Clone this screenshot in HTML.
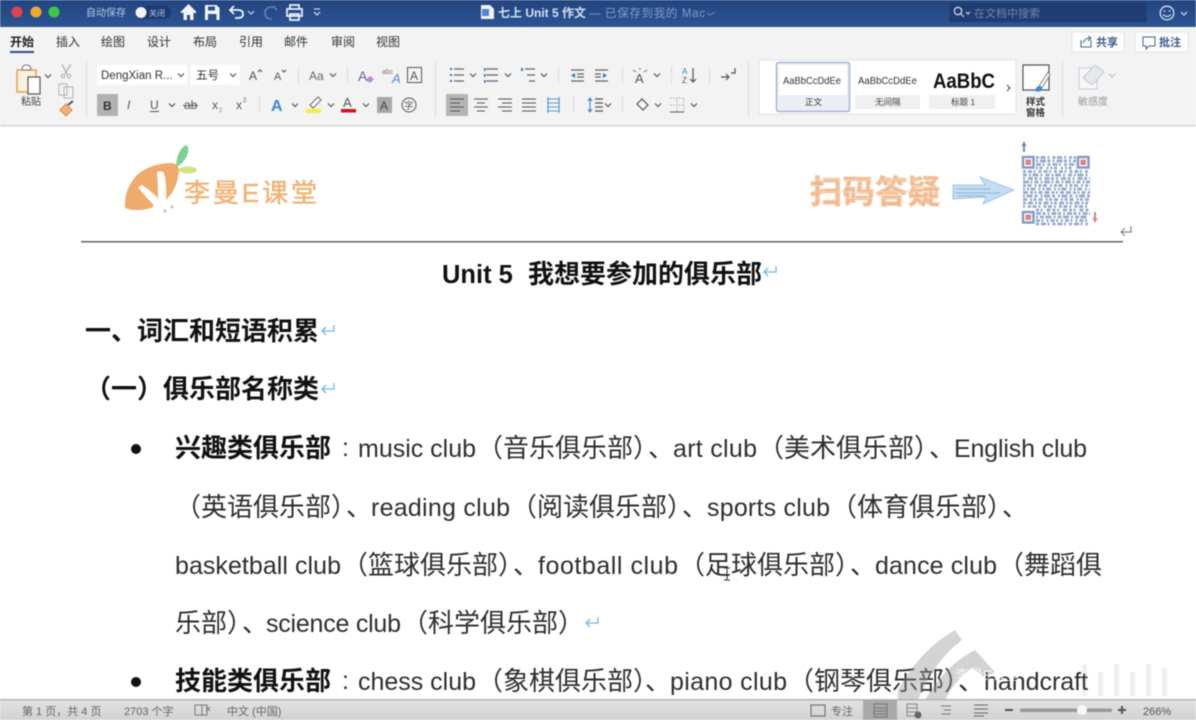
<!DOCTYPE html>
<html><head><meta charset="utf-8"><style>
html,body{margin:0;padding:0;background:#fff;width:1196px;height:720px;overflow:hidden}
svg{display:block;filter:blur(.4px)}
text{font-family:"Liberation Sans","Noto Sans CJK SC",sans-serif;white-space:pre}
.b text{font-size:25px;fill:#2e2e2e}
.c{font-size:26px!important}
.h{font-size:26px!important;font-weight:700;fill:#111!important}
.t{font-size:12px;fill:#333}
.s{font-size:10px;fill:#444}
.st{font-size:11px;fill:#666}
.ic{fill:none;stroke:#555;stroke-width:1.2}
</style></head><body>
<svg width="1196" height="720" viewBox="0 0 1196 720" xmlns="http://www.w3.org/2000/svg">
<defs>
<linearGradient id="tb" x1="0" y1="0" x2="0" y2="1"><stop offset="0" stop-color="#234580"/><stop offset="1" stop-color="#2c5494"/></linearGradient>
<linearGradient id="sb" x1="0" y1="0" x2="0" y2="1"><stop offset="0" stop-color="#e2e2e2"/><stop offset="1" stop-color="#d2d2d2"/></linearGradient>
<path id="chev" d="M-3-1.500 0 1.500 3-1.500" fill="none" stroke="#555" stroke-width="1.200"/>
<path id="pmk" d="M13-6V0H1M5-4 1 0 5 4" fill="none" stroke="#74b6e6" stroke-width="1.300"/>
</defs>
<rect width="1196" height="720" fill="#fff"/>

<!-- title bar -->
<rect width="1196" height="27" fill="url(#tb)"/>
<circle cx="17" cy="12" r="5.500" fill="#e0434f"/><circle cx="36" cy="12" r="5.500" fill="#f0a92e"/><circle cx="54" cy="12" r="5.500" fill="#3cc84a"/>
<text x="86" y="16" font-size="10" fill="#b4c8e6">自动保存</text>
<rect x="135" y="6" width="36" height="13" rx="6.500" fill="#1e3a70"/><circle cx="141" cy="12.500" r="5.500" fill="#f4f4f4"/>
<text x="149" y="16" font-size="8" fill="#b4c8e6">关闭</text>
<path d="M188.500 4 180.500 12 182 13.500 183.500 12.300V20H187V15H190V20H193.500V12.300L195 13.500 196.500 12Z" fill="#f2f5fb"/>
<path d="M205 5H216.500L219.500 8V20H205Z" fill="#f2f5fb"/><rect x="208" y="6.500" width="7" height="4" fill="#2a4f8e"/><rect x="208" y="14" width="8.500" height="6" fill="#2a4f8e"/>
<path d="M234 6 230 10 234 14M230 10H238Q243 10 243 14T238 18H235" fill="none" stroke="#eef3fa" stroke-width="1.800"/>
<path d="M248 11 251 14 254 11" fill="none" stroke="#c7d5ea" stroke-width="1.200"/>
<path d="M273 6 277 10M273 7H270Q264 9 265 14T272 19" fill="none" stroke="#6283b8" stroke-width="1.600"/>
<path d="M290 9V5H299V9M287 9H302V16H287ZM290 14H299V20H290Z" fill="none" stroke="#eef3fa" stroke-width="1.700"/>
<path d="M314 9H320M314 12 317 15 320 12" fill="none" stroke="#c7d5ea" stroke-width="1.300"/>
<path d="M481 5H490L494 9V19H481Z" fill="#eef2f9"/><rect x="482" y="9" width="7" height="7" fill="#4f86d4"/>
<text x="498" y="17" font-size="12" font-weight="700" fill="#d5e0f1">七上 Unit 5 作文</text>
<text x="589" y="17" font-size="11.500" fill="#7f9ccb" textLength="116">— 已保存到我的 Mac</text>
<path d="M707 13 710 15 715 12" fill="none" stroke="#6f8dbd" stroke-width="1"/>
<rect x="949" y="3" width="198" height="19" rx="2" fill="#1f3c73"/>
<circle cx="958" cy="11" r="3.700" fill="none" stroke="#cfdaee" stroke-width="1.300"/><path d="M961 14 964 17M966 12 968 14 970 12" fill="none" stroke="#cfdaee" stroke-width="1.200"/>
<text x="974" y="17" font-size="11" fill="#7488ad">在文档中搜索</text>
<circle cx="1167" cy="13" r="6.800" fill="none" stroke="#d7e2f2" stroke-width="1.300"/><circle cx="1164.500" cy="11" r=".9" fill="#d7e2f2"/><circle cx="1169.500" cy="11" r=".9" fill="#d7e2f2"/><path d="M1163 14.500Q1167 18.500 1171 14.500" fill="none" stroke="#d7e2f2" stroke-width="1.100"/>
<path d="M1181 12 1184 15 1187 12" fill="none" stroke="#d7e2f2" stroke-width="1.200"/>

<!-- ribbon -->
<rect y="27" width="1196" height="98" fill="#f3f3f3"/><rect y="125" width="1196" height="1.500" fill="#d4d4d4"/>
<g>
<text x="10" y="46" class="t" font-weight="700" style="fill:#222">开始</text><text x="56" y="46" class="t">插入</text><text x="101" y="46" class="t">绘图</text><text x="147" y="46" class="t">设计</text><text x="193" y="46" class="t">布局</text><text x="239" y="46" class="t">引用</text><text x="284" y="46" class="t">邮件</text><text x="331" y="46" class="t">审阅</text><text x="376" y="46" class="t">视图</text>
</g>
<rect x="10" y="51" width="24" height="2" fill="#2b4c8c"/>
<rect x="1072" y="32" width="52" height="20" fill="#fdfdfd" stroke="#e4e4e4"/><rect x="1135" y="32" width="53" height="20" fill="#fdfdfd" stroke="#e4e4e4"/>
<path d="M1081 40V47H1091V40M1083 43Q1085 38 1090 38M1088 36 1091 38 1088 41" fill="none" stroke="#44648f" stroke-width="1"/>
<text x="1096" y="46" font-size="11" font-weight="700" fill="#3a5a8c">共享</text>
<path d="M1143 37H1155V46H1149L1146 49V46H1143Z" fill="none" stroke="#44648f" stroke-width="1"/>
<text x="1159" y="46" font-size="11" font-weight="700" fill="#3a5a8c">批注</text>

<!-- clipboard -->
<path d="M17 70H36V92H17Z" fill="#fbf1e3" stroke="#e7a24f" stroke-width="1.500"/><path d="M22 70Q22 65 26.500 65T31 70Z" fill="#fff" stroke="#777"/><rect x="28" y="77" width="12" height="17" fill="#fff" stroke="#555" stroke-width="1.200"/>
<use href="#chev" x="48" y="76"/>
<text x="21" y="105" class="s">粘贴</text>
<path d="M62 64 67 74M71 64 65 74" fill="none" stroke="#aaa" stroke-width="1.200"/><circle cx="63" cy="76" r="1.800" fill="none" stroke="#aaa"/><circle cx="69" cy="76" r="1.800" fill="none" stroke="#aaa"/>
<path d="M59 84H67V95H59ZM64 87H73V98H64Z" fill="#f3f3f3" stroke="#b5b5b5"/>
<path d="M60 110 66 104 72 110 66 116Z" fill="#f0b37a" stroke="#d98a44"/><path d="M68 105 73 101" stroke="#555" stroke-width="2"/>
<rect x="86" y="60" width="1" height="58" fill="#dcdcdc"/>

<!-- font row -->
<rect x="97" y="65" width="90" height="20" rx="1" fill="#fff"/><rect x="191" y="65" width="49" height="20" rx="1" fill="#fff"/>
<text x="101" y="79" font-size="11.500" fill="#333">DengXian R...</text><use href="#chev" x="181" y="75"/>
<text x="196" y="79" font-size="11.500" fill="#333">五号</text><use href="#chev" x="233" y="75"/>
<text x="249" y="80" font-size="12" fill="#555">A</text><path d="M258 72 260 70 262 72" class="ic"/>
<text x="274" y="80" font-size="11" fill="#555">A</text><path d="M282 70 284 72 286 70" class="ic"/>
<rect x="298" y="66" width="1" height="18" fill="#ddd"/>
<text x="309" y="80" font-size="12" fill="#666">Aa</text><use href="#chev" x="333" y="75"/>
<rect x="347" y="66" width="1" height="18" fill="#ddd"/>
<text x="358" y="81" font-size="14" fill="#6c5a9e">A</text><path d="M366 80 370 76 374 79 370 83Z" fill="#b98ad0"/>
<text x="382" y="74" font-size="7" fill="#777">abc</text><text x="392" y="83" font-size="13" font-style="italic" fill="#4a90d0">A</text>
<rect x="407.500" y="67.500" width="14" height="15" fill="none" stroke="#555"/><text x="410" y="80" font-size="12" fill="#555">A</text>
<rect x="435" y="60" width="1" height="58" fill="#dcdcdc"/>

<!-- list row -->
<g fill="none" stroke="#666" stroke-width="1.200">
<path d="M454 69H464M454 75H464M454 81H464M486 69H498M486 75H498M486 81H498M525 69H535M527 75H535M529 81H535"/>
<path d="M571 70H584M577 74H584M577 77H584M571 81H584M595 70H608M595 74H601M595 77H601M595 81H608"/>
</g>
<g fill="#2f7ccc"><rect x="450" y="68" width="2" height="2"/><rect x="450" y="74" width="2" height="2"/><rect x="450" y="80" width="2" height="2"/><rect x="484" y="68" width="1.500" height="3"/><rect x="484" y="74" width="1.500" height="3"/><rect x="484" y="80" width="1.500" height="3"/><rect x="521" y="68" width="2" height="3"/><path d="M571 75.500 575 73V78Z"/><path d="M607 75.500 603 73V78Z"/></g>
<use href="#chev" x="473" y="75"/><use href="#chev" x="508" y="75"/><use href="#chev" x="544" y="75"/>
<rect x="558" y="66" width="1" height="18" fill="#ddd"/><rect x="622" y="66" width="1" height="18" fill="#ddd"/>
<text x="635" y="83" font-size="13" fill="#555">A</text><path d="M633 70 636 72M647 70 644 72M640 68V70" stroke="#2f7ccc" fill="none"/><use href="#chev" x="657" y="75"/>
<rect x="671" y="66" width="1" height="18" fill="#ddd"/>
<text x="682" y="74" font-size="8" fill="#2f7ccc">A</text><text x="682" y="83" font-size="8" fill="#555">Z</text><path d="M693 68V82M690 79 693 82 696 79" class="ic"/>
<rect x="709" y="66" width="1" height="18" fill="#ddd"/>
<path d="M721 77H729M726 74 729 77 726 80M735 68V73H731" class="ic"/>

<!-- format row -->
<rect x="97" y="94" width="21" height="22" rx="1" fill="#b2b2b2"/>
<text x="103" y="110" font-size="12" font-weight="700" fill="#333">B</text>
<text x="127" y="109" font-size="12" font-style="italic" fill="#555">I</text>
<text x="150" y="109" font-size="12" fill="#555">U</text><rect x="150" y="111" width="9" height="1" fill="#555"/><use href="#chev" x="172" y="105"/>
<text x="184" y="109" font-size="12" fill="#555">ab</text><rect x="183" y="105" width="15" height="1" fill="#555"/>
<text x="212" y="109" font-size="12" fill="#555">x</text><text x="219" y="112" font-size="6" fill="#4a90d0">2</text>
<text x="236" y="109" font-size="12" fill="#555">x</text><text x="243" y="102" font-size="6" fill="#555">2</text>
<rect x="259" y="95" width="1" height="18" fill="#ddd"/>
<text x="271" y="111" font-size="16" font-weight="700" fill="#3f86d0">A</text><use href="#chev" x="295" y="105"/>
<path d="M310 105 318 97 321 100 313 108Z" fill="#fff" stroke="#666"/><rect x="306" y="109" width="15" height="4" fill="#f5ee3a"/><use href="#chev" x="331" y="105"/>
<text x="343" y="107" font-size="13" fill="#555">A</text><rect x="341" y="109" width="15" height="3.500" fill="#d0121c"/><use href="#chev" x="366" y="105"/>
<rect x="377" y="97" width="15" height="16" fill="#a8a8a8"/><text x="380" y="110" font-size="12" fill="#444">A</text>
<circle cx="409" cy="105" r="7" fill="none" stroke="#555"/><text x="404" y="109" font-size="9.500" fill="#555">字</text>

<rect x="446" y="94" width="22" height="22" rx="1" fill="#b5b5b5"/>
<g fill="none" stroke="#555" stroke-width="1.100">
<path d="M450 99H464M450 103H460M450 107H464M450 111H460"/>
<path d="M474 99H488M477 103H485M474 107H488M477 111H485"/>
<path d="M498 99H512M502 103H512M498 107H512M502 111H512"/>
<path d="M522 99H536M522 103H536M522 107H536M522 111H536"/>
</g>
<path d="M547 99H560M547 103H560M547 107H560M547 111H560M548 97V113M559 97V113" fill="none" stroke="#5c9ad6" stroke-width="1.100"/>
<rect x="573" y="95" width="1" height="18" fill="#ddd"/>
<path d="M590 99V111M588 101 590 98 592 101M588 109 590 112 592 109" fill="none" stroke="#2f7ccc"/><path d="M595 99H603M595 103H603M595 107H603M595 111H603" class="ic"/>
<use href="#chev" x="608" y="105"/>
<rect x="622" y="95" width="1" height="18" fill="#ddd"/>
<path d="M637 104 642 99 648 105 643 110Z" fill="none" stroke="#555" stroke-width="1.200"/><use href="#chev" x="658" y="105"/>
<path d="M670 98H684V112H670M677 98V112M670 105H684" fill="none" stroke="#aaa" stroke-dasharray="1.500 1.500"/><path d="M670 112H684" stroke="#555"/><use href="#chev" x="694" y="105"/>
<rect x="748" y="60" width="1" height="58" fill="#dcdcdc"/>

<!-- style gallery -->
<rect x="759" y="60" width="257" height="54" fill="#fff" stroke="#e0e0e0"/>
<rect x="776.500" y="62.500" width="73" height="49" rx="2" fill="#ebeef5" stroke="#a7b3d5" stroke-width="1.500"/>
<rect x="779" y="65" width="68" height="30" fill="#fff"/>
<rect x="855" y="65" width="65" height="44" fill="#f0f0f0"/><rect x="855" y="65" width="65" height="30" fill="#fff"/>
<rect x="929" y="65" width="66" height="44" fill="#f0f0f0"/><rect x="929" y="65" width="66" height="30" fill="#fff"/>
<text x="783" y="84" font-size="10" fill="#333" textLength="58" lengthAdjust="spacingAndGlyphs">AaBbCcDdEe</text>
<text x="858" y="84" font-size="10" fill="#333" textLength="59" lengthAdjust="spacingAndGlyphs">AaBbCcDdEe</text>
<text x="933" y="88" font-size="21" font-weight="700" fill="#111" textLength="62" lengthAdjust="spacingAndGlyphs">AaBbC</text>
<text x="805" y="105" font-size="8.500" fill="#333">正文</text>
<text x="875" y="105" font-size="8.500" fill="#444">无间隔</text>
<text x="951" y="105" font-size="8.500" fill="#444">标题 1</text>
<path d="M1007 85 1010 88 1007 91" class="ic"/>
<path d="M1023 65H1049V90H1023Z" fill="#fff" stroke="#555" stroke-width="1.200"/>
<path d="M1048 72 1039 86 1042 88 1050 75Z" fill="#f2f2f2" stroke="#777" stroke-width=".8"/><path d="M1035 90Q1037 85 1041 86L1042 89Q1040 93 1035 91Z" fill="#3f8cd0"/>
<text x="1026" y="105" font-size="9.500" fill="#333" font-weight="700">样式</text>
<text x="1026" y="116" font-size="9.500" fill="#333" font-weight="700">窗格</text>
<rect x="1062" y="60" width="1" height="58" fill="#dcdcdc"/>
<rect x="1079" y="68" width="18" height="21" fill="#f7f7f7" stroke="#c5cdd6"/>
<path d="M1083 78 1095 65 1104 72 1092 85Z" fill="#e4e9ee" stroke="#c0c8d2"/>
<path d="M1109 74 1112 77 1115 74" fill="none" stroke="#bbb"/>
<text x="1078" y="105" font-size="10" fill="#999">敏感度</text>

<!-- header logo left -->
<path d="M125 207Q124 190 136 176 150 163 172 163 180 165 179 172 177 185 172 193L165 201Q150 211 135 210 127 210 125 207Z" fill="#eeab6c"/>
<path d="M138 187 142 185Q150 190 158 198L155 206Q146 198 138 187Z" fill="#fff"/>
<path d="M157 172Q161 170 164 173 167 185 166 200L158 200Q158 185 157 172Z" fill="#fff"/>
<ellipse cx="163" cy="206" rx="10" ry="7" fill="#fff"/>
<circle cx="165" cy="211" r="1.500" fill="#d9b8a0"/><circle cx="172" cy="207" r="1.500" fill="#d9b8a0"/>
<path d="M176 166Q177 150 186 145 190 147 187 156 183 164 176 167Z" fill="#7fd093"/>
<ellipse cx="188" cy="170" rx="9" ry="3.500" fill="#cbe784"/>
<text x="184" y="202" font-size="26" fill="#efb478" stroke="#efb478" stroke-width=".5" textLength="133">李曼E课堂</text>

<!-- header right -->
<text x="810" y="203" font-size="32" font-weight="700" fill="#f0b88a" stroke="#f4c9a5" stroke-width="1.200" textLength="130">扫码答疑</text>
<path d="M810 180H940M810 186H940M810 192H940M810 198H940" stroke="#fff" stroke-width=".8" opacity=".45"/>
<path d="M953 185H985L980 177 1014 190 983 204 986 197 953 199Z" fill="#c6dcef" stroke="#a3c6e4"/>
<path d="M956 189H990M956 193H1000M958 196H985" stroke="#8ab6dd" stroke-width="1"/>
<g fill="none" stroke="#8aa0c6" stroke-width="2.800" opacity=".9">
<path d="M1036 157.500H1076" stroke-dasharray="3 1.500 5 2 2 3"/>
<path d="M1036 161H1076" stroke-dasharray="2 2 6 1.500 3 2"/>
<path d="M1036 164.500H1076" stroke-dasharray="5 1.500 2 3 3 2"/>
<path d="M1036 168H1076" stroke-dasharray="2 1.500 3 4 2 2"/>
<path d="M1023 171.500H1090" stroke-dasharray="3 2 4 1.500 2 3"/>
<path d="M1023 175H1090" stroke-dasharray="4 2 2 1.500 6 2 2 3"/>
<path d="M1023 178.500H1090" stroke-dasharray="2 3 5 1.500 3 2"/>
<path d="M1023 182H1090" stroke-dasharray="6 1.500 2 2 4 2 2 1.500"/>
<path d="M1023 185.500H1090" stroke-dasharray="3 1.500 4 3 2 2"/>
<path d="M1023 189H1090" stroke-dasharray="2 2 2 1.500 5 3"/>
<path d="M1023 192.500H1090" stroke-dasharray="5 2 3 1.500 2 2 4 2"/>
<path d="M1023 196H1090" stroke-dasharray="2 1.500 6 2 3 3"/>
<path d="M1023 199.500H1090" stroke-dasharray="4 3 2 1.500 3 2"/>
<path d="M1023 203H1090" stroke-dasharray="3 2 5 2 2 1.500"/>
<path d="M1023 206.500H1090" stroke-dasharray="2 3 3 1.500 4 2"/>
<path d="M1036 210H1090" stroke-dasharray="3 1.500 2 4 4 2"/>
<path d="M1036 213.500H1090" stroke-dasharray="5 1.500 3 2 2 2"/>
<path d="M1036 217H1088" stroke-dasharray="2 2 4 1.500 6 2"/>
<path d="M1036 220.500H1088" stroke-dasharray="4 1.500 2 3 2 2"/>
<path d="M1036 224H1088" stroke-dasharray="3 2 5 1.500 2 3"/>
</g>
<g fill="none" stroke="#8299c2" stroke-width="2.400"><rect x="1023" y="157" width="10.500" height="10.500"/><rect x="1078" y="157" width="10.500" height="10.500"/><rect x="1023" y="212" width="10.500" height="10.500"/></g>
<g fill="#d98585"><rect x="1025.500" y="159.500" width="5.500" height="5.500"/><rect x="1080.500" y="159.500" width="5.500" height="5.500"/><rect x="1025.500" y="214.500" width="5.500" height="5.500"/></g>
<path d="M1024 141 1021.500 146H1023V152H1025V146H1026.500Z" fill="#6c8bb5"/>
<path d="M1095 223 1092.500 218H1094V212H1096V218H1097.500Z" fill="#d98078"/>
<rect x="81" y="241" width="1042" height="1.500" fill="#666"/>
<path d="M1131 226V232H1121M1125 228 1121 232 1125 236" fill="none" stroke="#888" stroke-width="1.200"/>

<!-- body -->
<g class="b">
<text x="442" y="283" class="h" style="font-size:25.500px!important">Unit 5</text>
<text x="528" y="283" class="h">我想要参加的俱乐部</text>
<text x="85" y="340" class="h">一、词汇和短语积累</text>
<text x="85" y="398" class="h">（一）</text><text x="163" y="398" class="h">俱乐部名称类</text>
<circle cx="136" cy="449" r="5" fill="#111"/><circle cx="136" cy="682" r="5" fill="#111"/>

<text x="175" y="457" class="h">兴趣类俱乐部</text><text x="342" y="456">:</text>
<text x="358" y="457" textLength="118">music club</text><text x="477" y="457" class="c">（</text><text x="503" y="457" class="c">音乐俱乐部</text><text x="633" y="457" class="c">）</text><text x="648" y="457" class="c">、</text>
<text x="673" y="457" textLength="84">art club</text><text x="758" y="457" class="c">（</text><text x="784" y="457" class="c">美术俱乐部</text><text x="914" y="457" class="c">）</text><text x="929" y="457" class="c">、</text>
<text x="954" y="457" textLength="133">English club</text>

<text x="175" y="516" class="c">（</text><text x="201" y="516" class="c">英语俱乐部</text><text x="331" y="516" class="c">）</text><text x="346" y="516" class="c">、</text>
<text x="371" y="516" textLength="139">reading club</text><text x="511" y="516" class="c">（</text><text x="537" y="516" class="c">阅读俱乐部</text><text x="667" y="516" class="c">）</text><text x="682" y="516" class="c">、</text>
<text x="707" y="516" textLength="123">sports club</text><text x="831" y="516" class="c">（</text><text x="857" y="516" class="c">体育俱乐部</text><text x="987" y="516" class="c">）</text><text x="1002" y="516" class="c">、</text>

<text x="175" y="574" textLength="166">basketball club</text><text x="342" y="574" class="c">（</text><text x="368" y="574" class="c">篮球俱乐部</text><text x="498" y="574" class="c">）</text><text x="513" y="574" class="c">、</text>
<text x="538" y="574" textLength="140">football club</text><text x="679" y="574" class="c">（</text><text x="705" y="574" class="c">足球俱乐部</text><text x="835" y="574" class="c">）</text><text x="850" y="574" class="c">、</text>
<text x="875" y="574" textLength="122">dance club</text><text x="998" y="574" class="c">（</text><text x="1024" y="574" class="c">舞蹈俱</text>

<text x="175" y="632" class="c">乐部</text><text x="227" y="632" class="c">）</text><text x="242" y="632" class="c">、</text>
<text x="266" y="632" textLength="135">science club</text><text x="402" y="632" class="c">（</text><text x="428" y="632" class="c">科学俱乐部</text><text x="558" y="632" class="c">）</text>

<text x="175" y="690" class="h">技能类俱乐部</text><text x="342" y="689">:</text>
<text x="358" y="690" textLength="118">chess club</text><text x="477" y="690" class="c">（</text><text x="503" y="690" class="c">象棋俱乐部</text><text x="633" y="690" class="c">）</text><text x="645" y="690" class="c">、</text>
<text x="670" y="690" textLength="117">piano club</text><text x="788" y="690" class="c">（</text><text x="814" y="690" class="c">钢琴俱乐部</text><text x="944" y="690" class="c">）</text><text x="958" y="690" class="c">、</text>
<text x="984" y="690" textLength="104">handcraft</text>
</g>
<use href="#pmk" x="763" y="272"/><use href="#pmk" x="321" y="331"/><use href="#pmk" x="321" y="389"/><use href="#pmk" x="585" y="623"/>
<path d="M724 568H730M727 568V580M724 580H730" fill="none" stroke="#333" stroke-width="1"/>

<!-- watermark -->
<g opacity=".42">
<path d="M898 690Q920 650 955 630L962 640Q935 660 918 700H898Z" fill="#999"/>
<path d="M925 700Q945 665 975 650L995 672 985 678 972 668Q955 680 945 700Z" fill="#999"/>
</g>
<g opacity=".12" fill="#888"><rect x="1082" y="664" width="5" height="32"/><rect x="1098" y="672" width="5" height="24"/><rect x="1114" y="664" width="5" height="32"/><rect x="1130" y="672" width="5" height="24"/><rect x="1146" y="664" width="5" height="32"/><rect x="1162" y="668" width="5" height="28"/></g>
<text x="955" y="680" font-size="14" fill="#fff" opacity=".8">李曼E课堂</text>

<!-- status bar -->
<rect y="700" width="1196" height="20" fill="url(#sb)"/><rect y="699" width="1196" height="1.500" fill="#b2b2b2"/>
<text x="22" y="715" class="st">第 1 页，共 4 页</text>
<text x="124" y="715" class="st">2703 个字</text>
<path d="M195 705H202V715H195ZM202 705H207V715H202M206 707 210 711M210 707 206 711" fill="none" stroke="#777" stroke-width="1"/>
<text x="227" y="715" class="st">中文 (中国)</text>
<path d="M811 705H825V716H811Z" fill="none" stroke="#777" stroke-width="1.200"/>
<text x="831" y="715" class="st">专注</text>
<rect x="863" y="700" width="34" height="20" fill="#a9a9a9"/>
<path d="M874 704H887V717H874ZM874 708H887M874 711H887M874 714H887" fill="none" stroke="#777"/>
<path d="M907 704H917V716H907ZM907 708H917M907 712H917" fill="none" stroke="#888"/><circle cx="918" cy="715" r="3.500" fill="#666"/>
<path d="M941 706H951M944 710H951M941 714H951" fill="none" stroke="#777"/>
<path d="M974 705H988M974 709H988M974 713H988M974 716H984" fill="none" stroke="#666"/>
<rect x="1005" y="709" width="8" height="2" fill="#555"/>
<rect x="1020" y="708.500" width="92" height="3.500" rx="1.500" fill="#999"/>
<circle cx="1082" cy="710" r="5" fill="#f8f8f8"/>
<path d="M1118 710H1126M1122 706V714" stroke="#555" stroke-width="2"/>
<text x="1143" y="715" font-size="11" fill="#555">266%</text>
</svg>
</body></html>
